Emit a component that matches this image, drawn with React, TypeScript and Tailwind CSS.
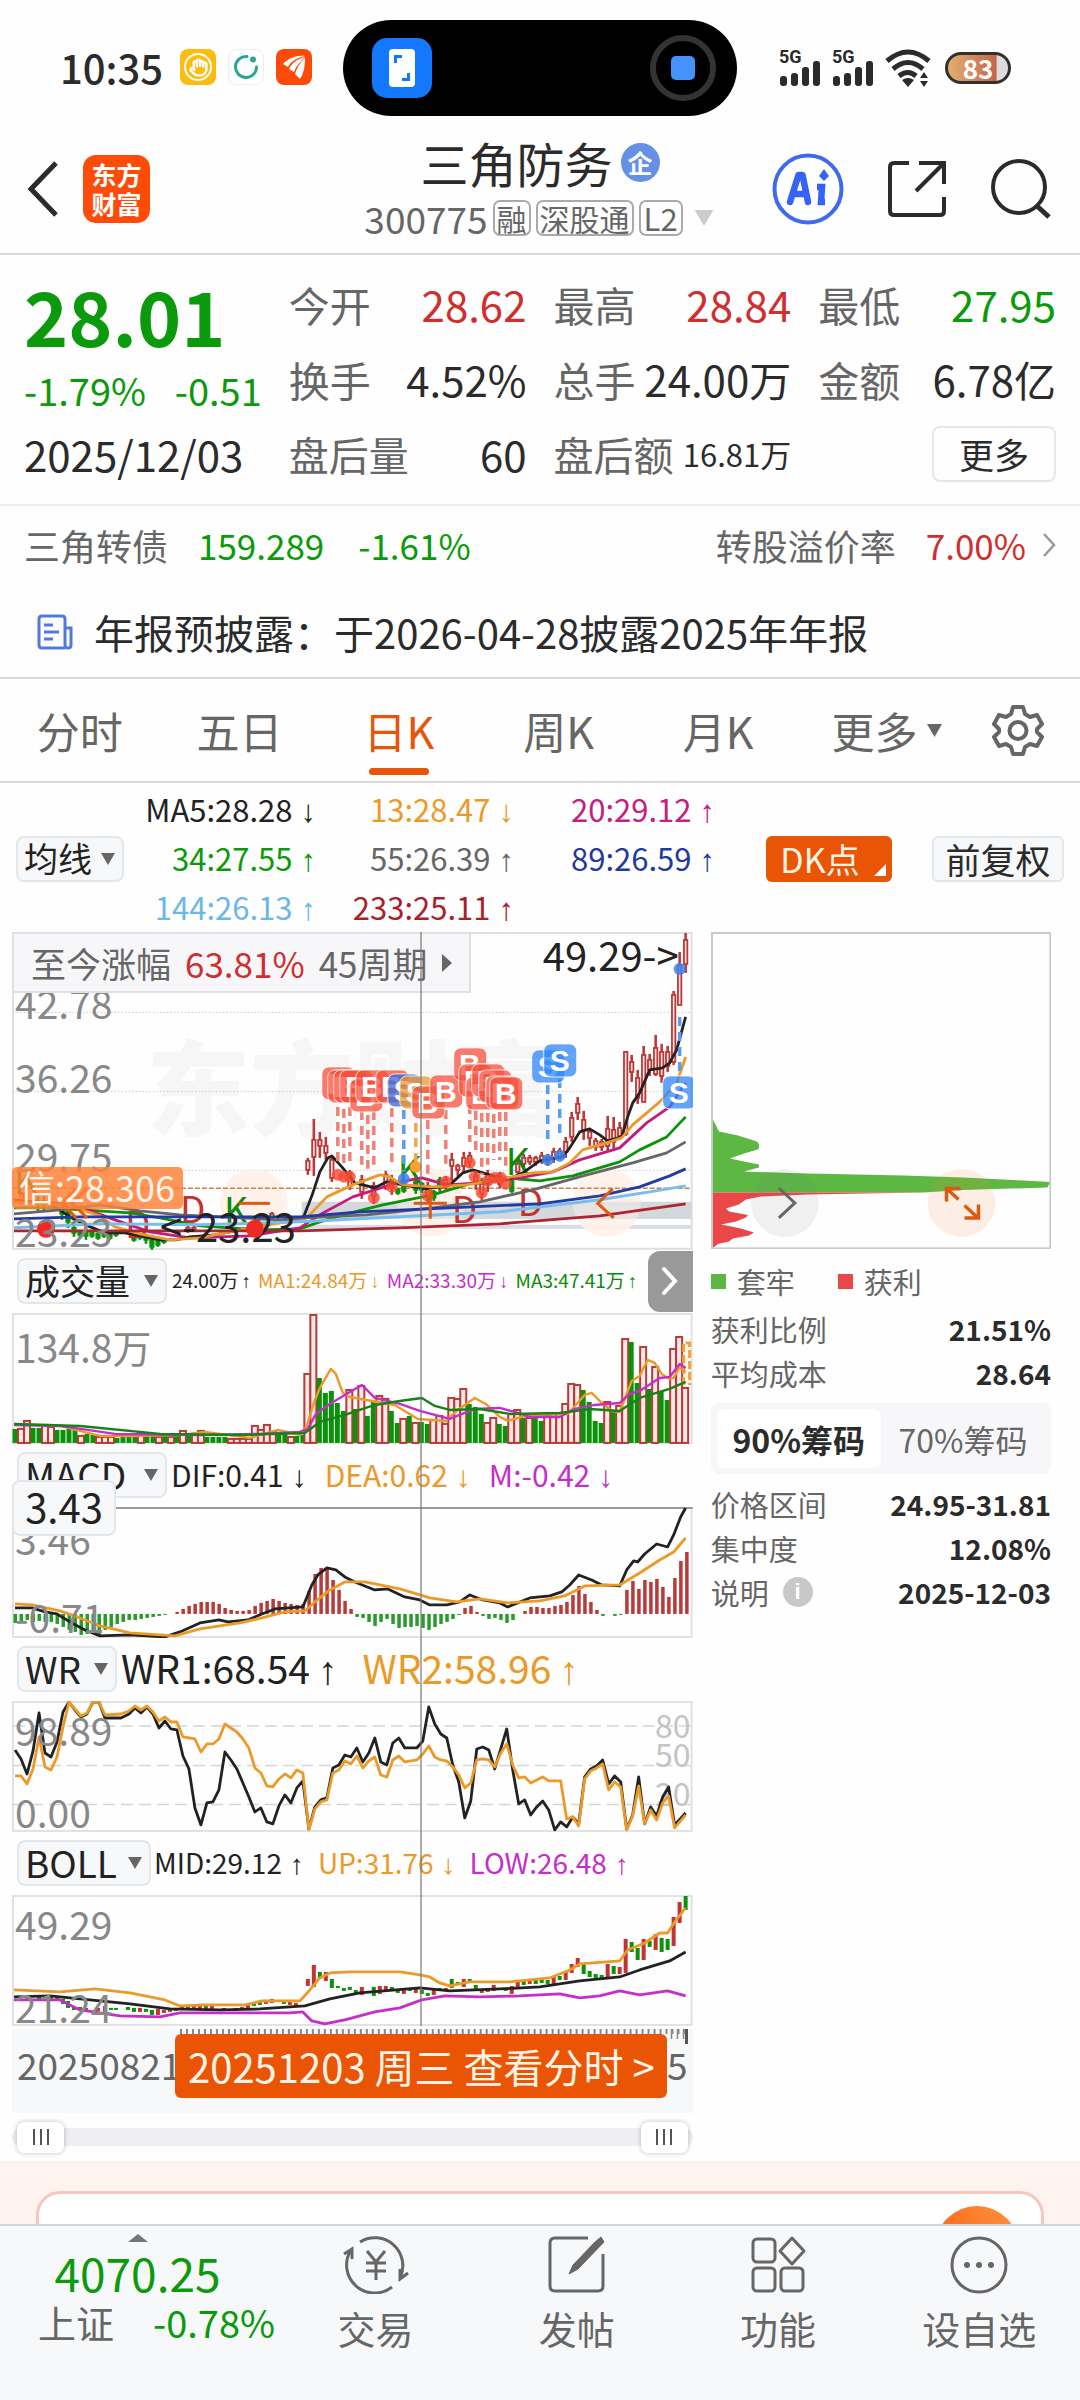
import React, { useState } from "react";
import { Hand } from "lucide-react";

type Pt = string;

/* ---------- small shared pieces ---------- */

function Arrow({ up, tight }: { up?: boolean; tight?: boolean }) {
  return <span className={"font-['Liberation_Sans',sans-serif] " + (tight ? "ml-[3px]" : "ml-[8px]")}>{up ? "↑" : "↓"}</span>;
}

function Triangle({ className }: { className: string }) {
  return (
    <svg viewBox="0 0 14 12" className={className} aria-hidden="true">
      <path d="M0 0H14L7 12Z" fill="currentColor" />
    </svg>
  );
}

function Picker({ label, options, width, size }: { label: string; options: string[]; width: string; size: string }) {
  return (
    <span className={"relative block h-[46px] shrink-0 " + width}>
      <select
        aria-label={label}
        className={
          "h-full w-full appearance-none rounded-[8px] border-2 border-[#e3e6ea] bg-[#f7f8fa] pb-[2px] pl-[6px] leading-[40px] text-[#222] " +
          size
        }
      >
        {options.map((o) => (
          <option key={o}>{o}</option>
        ))}
      </select>
      <Triangle className="pointer-events-none absolute right-[9px] top-[17px] h-[12px] w-[14px] text-[#666]" />
    </span>
  );
}

function Line({ points, color, width = 2.8 }: { points: Pt; color: string; width?: number }) {
  return <polyline points={points} fill="none" stroke={color} strokeWidth={width} strokeLinejoin="round" />;
}

const RED = "#b93a38";
const GREEN = "#0a930a";
const ORANGE = "#eb9a2a";
const PURPLE = "#c42fc9";

/* ---------- status bar ---------- */

function Signal() {
  return (
    <svg viewBox="0 0 42 38" className="h-[38px] w-[42px] overflow-visible text-[#2b2b2b]" aria-hidden="true">
      <text x="0" y="14" fontSize="18" fontWeight="700" fontFamily="Roboto, sans-serif" fill="currentColor">5G</text>
      <g fill="currentColor">
        <rect x="1" y="27" width="7" height="10" rx="3" />
        <rect x="12" y="24" width="7" height="13" rx="3" />
        <rect x="23" y="18" width="7" height="19" rx="3" />
        <rect x="34" y="12" width="7" height="25" rx="3" />
      </g>
    </svg>
  );
}

function StatusBar() {
  return (
    <div className="grid h-[125px] grid-cols-[1fr_394px_1fr] items-start">
      <div className="flex h-[134px] items-center gap-[12px] pl-[60px]">
        <span className="mr-[5px] text-[40px] font-medium leading-[50px] text-[#2b2b2b]">10:35</span>
        <span className="grid h-9 w-9 place-items-center rounded-[8px] bg-[#fdbb0d]">
          <span className="grid h-[28px] w-[28px] place-items-center rounded-full border-2 border-white">
            <Hand className="h-[19px] w-[19px] text-white" strokeWidth={3} />
          </span>
        </span>
        <span className="grid h-9 w-9 place-items-center rounded-[8px] border border-[#eee]">
          <svg viewBox="0 0 28 28" className="h-[28px] w-[28px]" aria-hidden="true">
            <path d="M15 3.5A10.5 10.5 0 1 0 24.5 14" fill="none" stroke="#25a794" strokeWidth="3" strokeLinecap="round" />
            <circle cx="21" cy="6.500" r="3" fill="#25a794" />
          </svg>
        </span>
        <span className="grid h-9 w-9 place-items-center rounded-[8px] bg-[#fc4a08]">
          <svg viewBox="0 0 30 30" className="h-[30px] w-[30px]" aria-hidden="true">
            <g fill="#fff">
              <path d="M4 12C10 6 17 3 26 4C18 6 12 9 9 15Z" />
              <path d="M10 17C13 11 18 7 26 5C21 10 17 14 15 20Z" />
              <path d="M16 22C18 16 21 10 26 6C26 14 25 21 21 27Z" />
            </g>
          </svg>
        </span>
      </div>
      <div className="mt-5 flex h-24 items-center justify-between rounded-full bg-black pl-[29px] pr-[21px]">
        <span className="grid h-[60px] w-[60px] place-items-center rounded-[15px] bg-[#1478fc]">
          <svg viewBox="0 0 26 38" className="h-[38px] w-[26px]" aria-hidden="true">
            <rect width="26" height="38" rx="4" fill="#fff" />
            <path d="M6.500 14V7.500H13M19.500 24V30.500H13" fill="none" stroke="#1478fc" strokeWidth="3" />
          </svg>
        </span>
        <span className="grid h-[66px] w-[66px] place-items-center rounded-full border-[6px] border-[#333]">
          <span className="h-6 w-6 rounded-[5px] bg-[#4493fd]" />
        </span>
      </div>
      <div className="flex h-[136px] items-center justify-end gap-[11px] pr-[69px]">
        <Signal />
        <Signal />
        <svg viewBox="0 0 46 38" className="h-[38px] w-[46px]" aria-hidden="true">
          <g fill="none" stroke="#2b2b2b" strokeWidth="5">
            <path d="M2 12Q23 -6 44 12" />
            <path d="M8 20Q23 7 38 20" />
            <path d="M14 27Q23 20 31 27" />
          </g>
          <path d="M17 31Q23 27 29 31L23 38Z" fill="#2b2b2b" />
          <path d="M35 29L39 23L43 29ZM35 32L39 38L43 32Z" fill="#2b2b2b" />
        </svg>
        <span className="ml-[3px] grid h-8 w-[66px] place-items-center rounded-full border-[3px] border-[#33302c] bg-[linear-gradient(90deg,#e0b070_0%,#c4664e_80%,#ddd_82%)] text-[26px] font-bold leading-[26px] text-white">
          83
        </span>
      </div>
    </div>
  );
}

/* ---------- title bar ---------- */

function Header() {
  return (
    <header className="grid h-[130px] grid-cols-[1fr_auto_1fr] items-center border-b-2 border-[#d9d9d9] text-[#2b2b2b]">
      <div className="flex items-center gap-[23px] pl-[26px]">
        <button aria-label="返回">
          <svg viewBox="0 0 34 56" className="h-[56px] w-[34px]" aria-hidden="true">
            <path d="M30 2L5 28L30 54" fill="none" stroke="#2b2b2b" strokeWidth="5" />
          </svg>
        </button>
        <a
          href="#home"
          className="grid h-[68px] w-[67px] place-items-center rounded-[13px] bg-[#fe4b08] text-center text-[25px] font-bold leading-[29px] text-white"
        >
          <span className="w-[52px]">东方财富</span>
        </a>
      </div>
      <div className="flex flex-col items-center">
        <h1 className="flex items-center gap-[8px] text-[48px] leading-[58px]">
          三角防务
          <span className="grid h-[39px] w-[39px] place-items-center rounded-full bg-[#6590e4] text-[25px] font-bold leading-[28px] text-white">
            企
          </span>
        </h1>
        <div className="flex items-center gap-[5px] text-[37px] leading-[54px] text-[#666]">
          300775
          <span className="rounded-[7px] border-2 border-[#aaa] px-[2px] text-[30px] leading-[32px]">融</span>
          <span className="rounded-[7px] border-2 border-[#aaa] px-[2px] text-[30px] leading-[32px]">深股通</span>
          <span className="rounded-[7px] border-2 border-[#aaa] px-[3px] text-[31px] leading-[32px]">L2</span>
          <Triangle className="ml-[4px] h-[16px] w-[24px] text-[#ccc]" />
        </div>
      </div>
      <div className="flex items-center justify-end gap-[43px] pr-[28px]">
        <button aria-label="AI">
          <svg viewBox="0 0 72 72" className="h-[72px] w-[72px]" aria-hidden="true">
            <circle cx="36" cy="36" r="33.500" fill="none" stroke="#4169ee" strokeWidth="4" />
            <path d="M18 49L26.500 22H30.500L36 49M21 41H34" fill="none" stroke="#3563f5" strokeWidth="6.500" strokeLinejoin="round" strokeLinecap="round" />
            <path d="M45 34H50L49 49H53" fill="none" stroke="#3563f5" strokeWidth="6.500" />
            <path d="M52 16L57 23L52 28L47 23Z" fill="#3563f5" />
          </svg>
        </button>
        <button aria-label="分享">
          <svg viewBox="0 0 60 60" className="h-[60px] w-[60px]" aria-hidden="true">
            <path d="M22 4H7Q3 4 3 8V52Q3 56 7 56H53Q57 56 57 52V38M32 4H57V25M57 4L29 32" fill="none" stroke="#2b2b2b" strokeWidth="4" />
          </svg>
        </button>
        <button aria-label="搜索">
          <svg viewBox="0 0 62 62" className="h-[62px] w-[62px]" aria-hidden="true">
            <circle cx="29" cy="29" r="26" fill="none" stroke="#2b2b2b" strokeWidth="4" />
            <path d="M47 48L59 59" stroke="#2b2b2b" strokeWidth="5" />
          </svg>
        </button>
      </div>
    </header>
  );
}

/* ---------- quote summary ---------- */

function Stat({ label, value, color = "text-[#2b2b2b]", size = "text-[42px]", labelSize = "text-[41px]" }: {
  label: string; value: string; color?: string; size?: string; labelSize?: string;
}) {
  return (
    <div className="flex h-[75px] items-center justify-between whitespace-nowrap leading-[60px]">
      <span className={"text-[#666] " + labelSize}>{label}</span>
      <span className={size + " " + color}>{value}</span>
    </div>
  );
}

function Quote() {
  return (
    <section className="grid grid-cols-4 gap-x-[27px] border-b-2 border-[#ededed] px-6 pb-[13px] pt-[11px]">
      <div className="row-span-2 text-[#0b9a0b]">
        <div className="mt-[9px] text-[75px] font-bold leading-[80px]">28.01</div>
        <div className="mt-[10px] flex justify-between text-[38px] leading-[50px]">
          <span>-1.79%</span>
          <span>-0.51</span>
        </div>
      </div>
      <Stat label="今开" value="28.62" color="text-[#cf2f2f]" />
      <Stat label="最高" value="28.84" color="text-[#cf2f2f]" />
      <Stat label="最低" value="27.95" color="text-[#0b9a0b]" />
      <Stat label="换手" value="4.52%" />
      <Stat label="总手" value="24.00万" />
      <Stat label="金额" value="6.78亿" />
      <div className="flex h-[75px] items-center text-[42px] leading-[60px] text-[#2b2b2b]">2025/12/03</div>
      <Stat label="盘后量" value="60" labelSize="text-[40px]" />
      <Stat label="盘后额" value="16.81万" size="text-[31px]" labelSize="text-[40px]" />
      <div className="flex h-[75px] items-center justify-end">
        <button className="h-[56px] w-[124px] rounded-[8px] border-2 border-[#e5e7e9] text-[35px] leading-[48px] text-[#2b2b2b]">更多</button>
      </div>
    </section>
  );
}

function Bond() {
  return (
    <a href="#bond" className="flex h-[80px] items-center px-6 pb-[3px] text-[36px] leading-[54px]">
      <span className="text-[#666]">三角转债</span>
      <span className="ml-[30px] text-[35px] text-[#0b9a0b]">159.289</span>
      <span className="ml-[34px] text-[35px] text-[#0b9a0b]">-1.61%</span>
      <span className="ml-auto text-[#666]">转股溢价率</span>
      <span className="ml-[30px] text-[35px] text-[#cf2f2f]">7.00%</span>
      <svg viewBox="0 0 14 24" className="ml-[16px] h-[24px] w-[14px]" aria-hidden="true">
        <path d="M2 1L12 12L2 23" fill="none" stroke="#999" strokeWidth="2.500" />
      </svg>
    </a>
  );
}

function Notice() {
  return (
    <a href="#notice" className="flex h-[93px] items-center border-b-2 border-[#d9d9d9] pl-[37px] text-[40px] leading-[54px] text-[#2b2b2b]">
      <svg viewBox="0 0 36 36" className="mr-[21px] h-[36px] w-[36px]" aria-hidden="true">
        <g fill="none" stroke="#5078dd" strokeWidth="3">
          <path d="M28 34H5Q2 34 2 31V5Q2 2 5 2H25Q28 2 28 5V31Q28 34 31 34Q34 34 34 31V14H28" />
          <path d="M7 11H16M7 18H22M7 25H16" />
        </g>
      </svg>
      年报预披露：于2026-04-28披露2025年年报
    </a>
  );
}

/* ---------- tabs and moving averages ---------- */

const TABS = ["分时", "五日", "日K", "周K", "月K"];

function Tabs() {
  const [tab, setTab] = useState("日K");
  return (
    <nav className="flex h-[104px] items-stretch border-b-2 border-[#d9d9d9] text-[43px] leading-[60px] text-[#666]">
      {TABS.map((t) => (
        <button key={t} onClick={() => setTab(t)} className={"relative flex-1 " + (t === tab ? "text-[#e65508]" : "")}>
          {t}
          {t === tab && <span className="absolute bottom-[6px] left-1/2 h-[7px] w-[60px] -translate-x-1/2 rounded-full bg-[#e65508]" />}
        </button>
      ))}
      <button className="flex w-[178px] items-center justify-center gap-[10px]">
        更多
        <Triangle className="h-[13px] w-[15px]" />
      </button>
      <button aria-label="设置" className="grid w-[104px] items-center pl-[16px]">
        <svg viewBox="0 0 52 52" className="h-[52px] w-[52px]" aria-hidden="true">
          <path
            d="M21 3H31L33 10L38 13L45 11L50 20L45 25V28L50 33L45 42L38 40L33 43L31 50H21L19 43L14 40L7 42L2 33L7 28V25L2 20L7 11L14 13L19 10Z"
            fill="none" stroke="#666" strokeWidth="4" strokeLinejoin="round"
          />
          <circle cx="26" cy="26.500" r="8.500" fill="none" stroke="#666" strokeWidth="4" />
        </svg>
      </button>
    </nav>
  );
}

const AVERAGES = [
  { t: "MA5:28.28", c: "text-[#222]" },
  { t: "13:28.47", c: "text-[#eb9a2a]" },
  { t: "20:29.12", c: "text-[#c4207f]", up: true },
  { t: "34:27.55", c: "text-[#0b9a0b]", up: true },
  { t: "55:26.39", c: "text-[#666]", up: true },
  { t: "89:26.59", c: "text-[#22399f]", up: true },
  { t: "144:26.13", c: "text-[#6cb6ea]", up: true },
  { t: "233:25.11", c: "text-[#ab1f2a]", up: true },
];

function Averages() {
  return (
    <section className="flex items-center px-4 pt-[2px]">
      <Picker label="主图指标" options={["均线"]} width="w-[108px]" size="text-[34px]" />
      <div className="grid flex-1 grid-cols-[192fr_198fr_201fr]">
        {AVERAGES.map((a) => (
          <span key={a.t} className={"h-[49px] whitespace-nowrap text-right text-[31px] leading-[48px] " + a.c}>
            {a.t}
            <Arrow up={a.up} />
          </span>
        ))}
      </div>
      <button className="relative ml-[51px] h-[46px] w-[126px] rounded-[6px] bg-[#e95504] pr-[18px] text-[34px] leading-[42px] text-[#fff3e6]">
        DK点
        <svg viewBox="0 0 12 12" className="absolute bottom-[6px] right-[6px] h-[12px] w-[12px]" aria-hidden="true">
          <path d="M12 0V12H0Z" fill="#fff" />
        </svg>
      </button>
      <button className="ml-[40px] h-[46px] w-[132px] rounded-[6px] border-2 border-[#e3e6ea] bg-[#f7f8fa] text-[35px] leading-[38px] text-[#2b2b2b]">
        前复权
      </button>
    </section>
  );
}

/* ---------- candlestick chart ---------- */

/* x, wick top, wick bottom, body top, body bottom */
const RED_CANDLES: number[][] = [
  [308, 1158, 1175, 1161, 1170], [314, 1119, 1176, 1140, 1157], [320, 1132, 1158, 1140, 1146], [326, 1137, 1160, 1146, 1153],
  [332, 1156, 1182, 1160, 1178], [350, 1170, 1190, 1173, 1186], [362, 1175, 1199, 1180, 1192], [374, 1182, 1204, 1186, 1196],
  [386, 1171, 1190, 1175, 1186], [392, 1175, 1195, 1180, 1188], [428, 1182, 1202, 1186, 1196], [440, 1180, 1192, 1183, 1188],
  [446, 1176, 1190, 1180, 1184], [452, 1153, 1181, 1160, 1166], [458, 1164, 1176, 1166, 1170], [464, 1152, 1174, 1158, 1166],
  [470, 1152, 1168, 1156, 1162], [476, 1170, 1190, 1176, 1184], [482, 1178, 1200, 1184, 1194], [488, 1170, 1192, 1175, 1184],
  [500, 1172, 1188, 1176, 1184], [518, 1160, 1178, 1164, 1172], [524, 1154, 1170, 1158, 1164], [530, 1155, 1165, 1158, 1162],
  [536, 1156, 1166, 1158, 1162], [542, 1152, 1164, 1156, 1160], [548, 1154, 1166, 1157, 1162], [554, 1148, 1163, 1152, 1158],
  [560, 1148, 1160, 1151, 1157], [566, 1137, 1158, 1142, 1152], [572, 1112, 1142, 1118, 1137], [578, 1097, 1120, 1104, 1113],
  [584, 1111, 1140, 1120, 1130], [590, 1128, 1146, 1132, 1138], [596, 1138, 1151, 1141, 1147], [602, 1139, 1151, 1142, 1147],
  [608, 1116, 1152, 1129, 1146], [614, 1117, 1151, 1130, 1142], [620, 1122, 1140, 1128, 1136], [626, 1051, 1136, 1052, 1134],
  [632, 1055, 1082, 1062, 1072], [638, 1070, 1104, 1078, 1098], [644, 1046, 1102, 1055, 1102], [650, 1054, 1076, 1060, 1070],
  [656, 1035, 1076, 1048, 1074], [662, 1044, 1083, 1052, 1076], [668, 1046, 1072, 1052, 1066], [674, 991, 1065, 995, 1062],
  [680, 952, 1005, 965, 1005], [686, 933, 973, 940, 964],
  [188, 1226, 1233, 1228, 1231], [194, 1225, 1232, 1228, 1230], [258, 1216, 1222, 1217, 1221], [272, 1212, 1219, 1214, 1218], [22, 1192, 1204, 1194, 1202],
];
const GREEN_CANDLES: number[][] = [
  [38, 1196, 1211, 1201, 1204], [44, 1196, 1211, 1201, 1205], [62, 1204, 1220, 1208, 1214], [68, 1204, 1228, 1212, 1222], [74, 1224, 1237, 1228, 1233],
  [80, 1230, 1238, 1232, 1235], [86, 1229, 1240, 1232, 1236], [92, 1230, 1238, 1232, 1236], [98, 1232, 1240, 1234, 1238], [104, 1231, 1238, 1233, 1236],
  [110, 1232, 1240, 1234, 1238], [116, 1230, 1237, 1232, 1235], [134, 1234, 1242, 1236, 1240], [140, 1233, 1240, 1235, 1238], [146, 1235, 1244, 1237, 1240],
  [152, 1236, 1250, 1239, 1247], [158, 1238, 1247, 1240, 1245], [164, 1238, 1244, 1240, 1242], [398, 1188, 1195, 1190, 1193], [404, 1182, 1193, 1185, 1191],
  [416, 1180, 1194, 1182, 1190], [422, 1182, 1193, 1184, 1190], [434, 1190, 1201, 1192, 1198], [440, 1177, 1190, 1180, 1186], [512, 1178, 1193, 1180, 1191],
];

const BUYS = [[338, 1083], [344, 1086], [350, 1086], [356, 1086], [366, 1095], [372, 1086], [392, 1086], [428, 1102], [446, 1091], [470, 1064], [475, 1080], [482, 1093], [488, 1080], [495, 1086], [502, 1092], [506, 1093]];
const STALKS = [[338, 1107, 1165], [344, 1109, 1165], [350, 1107, 1165], [362, 1111, 1165], [368, 1115, 1172], [374, 1111, 1165], [392, 1108, 1165], [428, 1120, 1180], [446, 1110, 1170], [470, 1105, 1142], [476, 1111, 1152], [482, 1113, 1175], [488, 1113, 1165], [494, 1114, 1160], [500, 1112, 1160], [506, 1112, 1168]];
const DOTS = [[338, 1175], [344, 1177], [350, 1177], [374, 1198], [392, 1187], [428, 1196], [446, 1182], [470, 1163], [475, 1177], [482, 1193], [488, 1181], [495, 1178], [501, 1178], [506, 1184]];

function Mark({ x, y, t, fill }: { x: number; y: number; t: string; fill: string }) {
  return (
    <g>
      <rect x={x - 16} y={y - 16} width="33" height="33" rx="7" fill={fill} fillOpacity="0.75" stroke="#fff" strokeOpacity="0.8" />
      <text x={x} y={y + 11} fontSize="30" fontWeight="700" textAnchor="middle" fill="#fff" fontFamily="Liberation Sans, sans-serif">{t}</text>
    </g>
  );
}

function AxisLabel({ className, children }: { className: string; children: React.ReactNode }) {
  return <span className={"pointer-events-none absolute left-[3px] text-[39px] leading-[40px] text-[#888] " + className}>{children}</span>;
}

function Candles({ list, color, fill }: { list: number[][]; color: string; fill: string }) {
  return (
    <g stroke={color} fill={fill}>
      {list.map(([x, a, b, c, d], i) => (
        <g key={i}>
          <path d={`M${x} ${a}V${b}`} strokeWidth="2.600" />
          <rect x={x - 1.7} y={c} width="3.400" height={d - c} strokeWidth="1.800" />
        </g>
      ))}
    </g>
  );
}

function PriceChart() {
  return (
    <div className="relative overflow-hidden">
      <svg viewBox="12 932 681 318" className="block h-auto w-full" fontFamily="Noto Sans CJK SC, sans-serif" role="img" aria-label="日K线图">
        <text x="146" y="1128" fontSize="104" fontWeight="900" fill="#f6f6f6">东方财富</text>
        <rect x="13" y="933" width="679" height="316" fill="none" stroke="#dedfe1" strokeWidth="2" />
        <path d="M13 1012.5H692M13 1091.5H692M13 1170.5H692" stroke="#ccc" strokeDasharray="1.500 2" />
        <rect x="302" y="1202" width="390" height="17" fill="#d4d7db" />
        <rect x="302" y="1225" width="390" height="4" fill="#dadce4" />
        {[77, 254, 431, 607].map((x) => (
          <circle key={x} cx={x} cy="1203" r="34" fill="#fff1e9" fillOpacity="0.9" />
        ))}
        <rect x="302" y="1202" width="390" height="17" fill="#d4d7db" fillOpacity="0.5" />
        <path d="M13 1188.5H692" stroke="#c9814a" strokeWidth="1.500" strokeDasharray="5 2" />
        <Candles list={RED_CANDLES} color={RED} fill="#fbe6e4" />
        <Candles list={GREEN_CANDLES} color={GREEN} fill="#0a930a" />
        <g fontSize="37" fill="#c8302c">
          <text x="125" y="1238">D</text>
          <text x="180" y="1223">D</text>
          <text x="452" y="1223">D</text>
          <text x="518" y="1216">D</text>
        </g>
        <g fontSize="37" fill="#0b8a0b">
          <text x="14" y="1194">K</text>
          <text x="224" y="1224">K</text>
          <text x="398" y="1183">K</text>
          <text x="506" y="1175">K</text>
        </g>
        <Line color={GREEN} points="14,1208 50,1208 130,1213 160,1218 200,1226 260,1230 300,1229 317,1223 343,1215 383,1205 433,1195 473,1183 507,1178 540,1181 573,1176 620,1162 640,1150 667,1137 686,1117" />
        <Line color="#c31c7c" points="14,1202 60,1203 85,1209 115,1220 150,1232 190,1238 250,1236 300,1228 320,1215 353,1197 400,1182 422,1178 447,1185 480,1183 520,1178 553,1172 580,1160 620,1148 647,1123 670,1107 686,1083" />
        <Line color="#222" points="14,1200 50,1204 75,1220 88,1226 105,1233 125,1233 140,1236 160,1240 176,1240 190,1237 215,1235 240,1230 290,1220 303,1219 312,1196 320,1172 328,1158 332,1156 342,1167 355,1183 375,1188 387,1182 403,1185 427,1189 450,1185 463,1173 473,1170 490,1175 507,1180 523,1173 540,1161 563,1157 570,1148 580,1132 590,1129 600,1135 608,1141 622,1137 628,1117 633,1103 640,1093 650,1070 663,1068 670,1063 677,1050 686,1017" />
        <Line color={ORANGE} points="14,1202 70,1206 100,1216 115,1227 140,1234 170,1240 200,1238 250,1228 300,1220 307,1218 327,1197 353,1185 380,1175 390,1177 403,1185 433,1187 467,1185 507,1178 533,1173 553,1172 570,1163 583,1150 607,1143 622,1138 633,1125 660,1102 677,1083 686,1057" />
        <Line color="#666" points="14,1214 60,1210 100,1205 140,1211 180,1215 280,1220 303,1218 367,1215 433,1208 480,1202 533,1190 587,1175 633,1163 667,1153 686,1142" />
        <Line color="#79bdec" width={3} points="14,1228 100,1224 200,1225 300,1222 400,1217 500,1212 600,1200 650,1192 686,1186" />
        <Line color="#2339a3" points="14,1219 80,1217 180,1217 300,1217 360,1212 450,1208 540,1204 600,1196 640,1187 670,1176 686,1169" />
        <Line color="#ac2530" points="14,1231 150,1231 300,1231 400,1228 500,1224 600,1216 686,1204" />
        <circle cx="46" cy="1229" r="9" fill="#ee2a24" />
        <g strokeWidth="3.500" fill="none" strokeDasharray="9 6">
          {STALKS.map(([x, a, b], i) => (
            <path key={i} d={`M${x} ${a}V${b}`} stroke="#ec8377" />
          ))}
          <path d="M404 1110V1172M548 1085V1142M560 1079V1137M680 1017V1077" stroke="#5c9cf0" />
          <path d="M416 1123V1162" stroke="#eeaa4a" />
        </g>
        {DOTS.map(([x, y], i) => (
          <circle key={i} cx={x} cy={y} r="6" fill="#f5482f" fillOpacity="0.8" />
        ))}
        <circle cx="416" cy="1167" r="6" fill="#f8a030" />
        {[[404, 1179], [548, 1160], [560, 1156], [680, 969]].map(([x, y]) => (
          <circle key={x} cx={x} cy={y} r="6" fill="#3d82ef" fillOpacity="0.85" />
        ))}
        {BUYS.slice(0, 7).map(([x, y], i) => <Mark key={i} x={x} y={y} t="B" fill="#f5503c" />)}
        <Mark x={404} y={1090} t="S" fill="#3468d8" />
        <Mark x={416} y={1092} t="S" fill="#f09a30" />
        {BUYS.slice(7).map(([x, y], i) => <Mark key={i} x={x} y={y} t="B" fill="#f5503c" />)}
        <Mark x={548} y={1066} t="S" fill="#2f86f8" />
        <Mark x={560} y={1060} t="S" fill="#2f86f8" />
        <Mark x={679} y={1092} t="S" fill="#2f86f8" />
        <g stroke="#e05a10" fill="none" strokeWidth="3">
          <path d="M76 1189L62 1203L76 1218M87 1189L72 1203L87 1218" />
          <path d="M239 1203.500H270" />
          <path d="M414 1203.500H447M430.500 1189V1219" />
          <path d="M613 1189L598 1203.500L614 1218" />
        </g>
        <text x="160" y="1242" fontSize="40" fill="#222">&lt;-23.23</text>
        <circle cx="255" cy="1229" r="9" fill="#ee2a24" />
        <text x="543" y="971" fontSize="40" fill="#222">49.29-&gt;</text>
      </svg>
      <AxisLabel className="top-[50px]">42.78</AxisLabel>
      <AxisLabel className="top-[124px]">36.26</AxisLabel>
      <AxisLabel className="top-[203px]">29.75</AxisLabel>
      <AxisLabel className="top-[278px]">23.23</AxisLabel>
      <span className="absolute left-0 top-[235px] h-[42px] rounded-[5px] bg-[#ff8238]/85 pl-[7px] pr-[8px] text-[36px] leading-[38px] text-[#fff5ea]">
        信:28.306
      </span>
      <button className="absolute left-0 top-0 flex h-[61px] items-center gap-[14px] border-2 border-[#e0e1e4] bg-[#f7f7fa] pl-[17px] pr-[17px] text-[35px] leading-[54px] text-[#666]">
        <span>至今涨幅</span>
        <span className="text-[#cf2f2f]">63.81%</span>
        <span>45周期</span>
        <svg viewBox="0 0 10 18" className="h-[18px] w-[10px]" aria-hidden="true">
          <path d="M0 0L10 9L0 18Z" fill="#666" />
        </svg>
      </button>
    </div>
  );
}

/* ---------- indicator charts ---------- */

const VOL_LEFT = "G14 R15 R23 G15 G15 R19 R17 G13 G13 G14 G14 R8 G9 G8 R7 R7 R7 G5 G6 G6 G7 R11 G8 G8 R7 G8 R7 G8 R13 G9 R10 R13 G6 G6 G6 G6 R5 R5 R5 R5 R18 R14 R19 R12 G10 G10 R7 G7 G8".split(" ");
const VOL_RIGHT = "R70 R129 G65 G50 G52 G40 G32 R54 G34 R58 G27 G41 R48 R45 G32 G20 R25 G27 R21 G21 G19 R24 R28 R20 R46 R45 R55 G39 G36 G29 R21 R26 G19 G17 R30 R34 G25 R26 G25 G22 R29 R30 R30 R40 R60 R59 G53 G41 G22 G20 R42 G31 R38 R105 G101 G60 R97 G54 R77 G52 G43 R95 R107 R56".split(" ");

function Bar({ x, code }: { x: number; code: string }) {
  const h = Number(code.slice(1));
  return code[0] === "G" ? (
    <rect x={x - 2.5} y={1442 - h} width="5" height={h} fill={GREEN} />
  ) : (
    <rect x={x - 3} y={1443 - h} width="6" height={h - 1} fill="#fbe9e8" stroke={RED} strokeWidth="2" />
  );
}

function VolumeChart() {
  return (
    <div className="relative">
      <svg viewBox="12 1312 681 131" className="block h-auto w-full" role="img" aria-label="成交量">
        <rect x="13" y="1313" width="679" height="129" fill="none" stroke="#e0e1e3" strokeWidth="2" />
        {VOL_LEFT.map((c, i) => <Bar key={i} x={15 + 6 * i} code={c} />)}
        {VOL_RIGHT.map((c, i) => <Bar key={i} x={307.5 + 6 * i} code={c} />)}
        <path d="M684 1384V1342H690V1384" fill="#fff6e8" stroke="#f2a23a" strokeWidth="3" strokeDasharray="8 3" />
        <Line color={ORANGE} width={2.4} points="14,1423 60,1425 80,1430 100,1435 130,1435 180,1434 205,1431 250,1437 278,1429 300,1434 307,1425 314,1402 320,1387 331,1368 336,1373 343,1392 350,1396 372,1400 395,1404 418,1418 446,1420 458,1409 475,1397 486,1403 500,1416 508,1420 530,1414 568,1413 585,1394 592,1392 600,1400 612,1410 620,1411 632,1380 640,1375 648,1359 655,1362 662,1373 670,1378 674,1377 680,1366 686,1371" />
        <Line color={PURPLE} width={2.4} points="14,1424 60,1425 115,1433 200,1434 260,1433 300,1431 308,1428 316,1413 330,1403 350,1391 362,1384 375,1397 400,1403 420,1410 450,1418 475,1408 500,1407 515,1411 530,1416 560,1416 575,1408 595,1404 620,1402 630,1393 640,1390 660,1377 670,1376 680,1363 686,1367" />
        <Line color="#178217" width={2.4} points="14,1423 80,1425 160,1433 240,1434 305,1432 320,1421 345,1414 375,1404 400,1400 422,1397 435,1405 450,1409 480,1408 510,1413 560,1412 590,1408 620,1410 640,1397 670,1388 686,1381" />
      </svg>
      <AxisLabel className="top-[13px]">134.8万</AxisLabel>
    </div>
  );
}

const HIST = [
  -9, -7, -6, -8, -7, -8, -8, -10, -13, -16, -18, -21, -20, -19, -22, -16, -13, -10, -8, -6, -6, -5, -4, -3, -2, -1, 0, 2, 5, 8, 10, 12, 12, 12, 10, 6, 4, 3, 3, 4, 8, 11, 13, 15, 13, 11, 10, 9, 10,
  23, 40, 46, 46, 34, 24, 13, 5, -3, -4, -8, -12, -8, -5, -10, -14, -13, -13, -12, -14, -16, -13, -10, -8, -5, -1, 6, 8, 2, -2, -5, -4, -6, -9, -6, 0, 3, 7, 7, 6, 6, 8, 9, 12, 19, 28, 20, 12, 4, -2, 0, -2, -1,
  24, 33, 25, 34, 32, 35, 27, 17, 36, 53, 62,
];

function MacdChart() {
  return (
    <div className="relative">
      <svg viewBox="12 1507 681 131" className="block h-auto w-full" role="img" aria-label="MACD">
        <path d="M13 1507V1637H692V1507" fill="none" stroke="#e0e1e3" strokeWidth="2" />
        <path d="M12 1508H693" stroke="#777" strokeWidth="1.500" />
        {HIST.map((v, i) => (
          <rect key={i} x={13.5 + 6 * i} y={v > 0 ? 1614 - v : 1614} width="3.500" height={Math.abs(v)} fill={v > 0 ? RED : "#2a9a2a"} />
        ))}
        <Line color="#222" points="15,1608 32,1608 45,1612 57,1614 70,1622 85,1630 100,1636 130,1635 165,1637 180,1632 200,1623 219,1620 228,1622 248,1620 262,1614 275,1609 303,1607 312,1585 318,1575 327,1568 336,1570 345,1577 355,1582 375,1590 388,1589 405,1597 420,1600 430,1605 447,1605 460,1602 470,1595 483,1600 500,1603 508,1607 530,1598 550,1596 562,1592 570,1585 579,1575 592,1580 602,1585 620,1586 627,1570 634,1561 638,1562 645,1554 657,1544 668,1547 674,1535 681,1517 686,1508" />
        <Line color={ORANGE} points="15,1604 32,1605 60,1611 80,1618 100,1626 130,1633 175,1636 200,1629 240,1623 262,1618 285,1612 305,1611 315,1602 330,1590 345,1582 365,1582 400,1589 430,1598 457,1602 480,1599 508,1603 540,1601 565,1596 585,1586 620,1585 640,1573 660,1560 674,1552 686,1538" />
      </svg>
      <AxisLabel className="top-[11px]">3.46</AxisLabel>
      <AxisLabel className="top-[89px]">-0.71</AxisLabel>
      <span className="absolute left-0 top-[-27px] h-[56px] w-[104px] rounded-[8px] border-2 border-[#e3e6ea] bg-[#f7f8fa] text-center text-[40px] leading-[48px] text-[#222]">3.43</span>
    </div>
  );
}

function WrChart() {
  return (
    <div className="relative">
      <svg viewBox="12 1701 681 131" className="block h-auto w-full" role="img" aria-label="WR">
        <rect x="13" y="1702" width="679" height="129" fill="none" stroke="#e0e1e3" strokeWidth="2" />
        <path d="M13 1726H692M13 1765.500H692M13 1804.500H692" stroke="#d5d5d5" strokeWidth="1.500" strokeDasharray="12 6" />
        <g fontSize="32" fill="#c4c4c4" textAnchor="end" fontFamily="Noto Sans CJK SC, sans-serif">
          <text x="691" y="1738">80</text>
          <text x="691" y="1767">50</text>
          <text x="691" y="1806">20</text>
        </g>
        <Line color="#222" points="15,1750 21,1759 27,1774 33,1751 39,1713 45,1753 51,1757 57,1742 63,1712 69,1702 75,1710 81,1717 87,1714 93,1702 99,1702 105,1718 121,1718 129,1714 135,1708 141,1713 147,1707 153,1714 159,1728 165,1721 171,1729 177,1730 183,1756 189,1769 195,1808 201,1825 207,1803 213,1802 219,1790 225,1752 231,1760 237,1769 243,1783 249,1797 255,1812 261,1808 267,1822 273,1824 279,1806 285,1795 291,1803 297,1788 303,1781 309,1829 315,1807 321,1800 327,1798 333,1768 339,1765 345,1755 351,1757 357,1748 363,1762 369,1753 375,1738 381,1762 387,1765 393,1743 399,1738 405,1748 417,1748 423,1741 429,1707 435,1724 441,1734 447,1738 453,1765 459,1782 465,1818 471,1801 477,1749 483,1747 489,1750 495,1769 501,1749 507,1729 513,1770 519,1804 525,1800 531,1815 537,1807 543,1801 549,1810 555,1830 561,1822 567,1827 573,1817 579,1824 585,1777 591,1769 597,1766 603,1760 609,1784 615,1776 621,1782 627,1829 633,1815 639,1777 645,1824 651,1807 657,1816 663,1797 669,1787 675,1825 686,1813" />
        <Line color={ORANGE} points="15,1776 21,1776 27,1784 33,1769 39,1737 45,1767 51,1770 57,1757 63,1727 69,1702 75,1709 81,1716 87,1713 93,1702 99,1702 105,1715 121,1714 129,1711 135,1706 141,1710 147,1706 153,1712 159,1721 165,1717 171,1722 177,1722 183,1737 189,1738 195,1739 201,1752 207,1744 213,1744 219,1739 225,1724 231,1728 237,1732 243,1739 249,1748 255,1768 261,1773 267,1786 273,1787 279,1779 285,1774 291,1778 297,1770 303,1773 309,1830 315,1809 321,1802 327,1800 333,1773 339,1770 345,1761 351,1764 357,1756 363,1768 369,1761 375,1757 381,1775 387,1777 393,1760 399,1756 405,1762 417,1760 423,1754 429,1746 435,1757 441,1760 447,1761 453,1767 459,1775 465,1788 471,1783 477,1760 483,1759 489,1760 495,1767 501,1753 507,1744 513,1765 519,1778 525,1777 531,1783 543,1777 549,1781 561,1781 567,1819 573,1817 579,1826 585,1779 591,1771 597,1768 603,1764 609,1790 615,1782 621,1787 627,1830 633,1816 639,1786 645,1824 651,1810 657,1820 663,1803 669,1796 675,1828 686,1815" />
      </svg>
      <AxisLabel className="top-[8px]">98.89</AxisLabel>
      <AxisLabel className="top-[90px]">0.00</AxisLabel>
    </div>
  );
}

/* x, top, bottom, 1 = rising */
const BOLL_BARS: number[][] = [
  [27, 1996, 1999, 1], [39, 1997, 2000, 0], [45, 1996, 2001, 1], [51, 1997, 2000, 0], [57, 1998, 2001, 0], [63, 1999, 2004, 0], [68, 2001, 2008, 0], [74, 2007, 2010, 0],
  [80, 2007, 2010, 0], [86, 2008, 2011, 1], [98, 2008, 2011, 1], [105, 2006, 2012, 1], [111, 2008, 2010, 0], [116, 2008, 2010, 0], [128, 2007, 2010, 0], [134, 2008, 2012, 0],
  [140, 2008, 2012, 1], [146, 2009, 2012, 0], [152, 2010, 2015, 0], [158, 2009, 2015, 1], [164, 2010, 2013, 1], [170, 2008, 2012, 1], [176, 2008, 2011, 0], [182, 2007, 2010, 1],
  [188, 2007, 2010, 0], [194, 2006, 2010, 1], [200, 2004, 2009, 1], [206, 2006, 2009, 0], [212, 2005, 2009, 1], [224, 2008, 2010, 0], [236, 2008, 2011, 1], [242, 2007, 2010, 1],
  [248, 2005, 2010, 1], [254, 2003, 2006, 0], [260, 2001, 2005, 0], [266, 2000, 2004, 1], [272, 1999, 2003, 1], [284, 2002, 2004, 0], [290, 2002, 2005, 1], [296, 2003, 2006, 1],
  [308, 1979, 1986, 1], [314, 1965, 1987, 1], [320, 1972, 1979, 0], [326, 1972, 1981, 1], [332, 1979, 1988, 0], [338, 1986, 1988, 0], [344, 1988, 1991, 0], [350, 1987, 1990, 0],
  [356, 1990, 1994, 0], [362, 1987, 1995, 1], [368, 1991, 1993, 0], [374, 1987, 1996, 0], [380, 1986, 1994, 1], [386, 1986, 1991, 1], [392, 1987, 1991, 0], [398, 1991, 1993, 0],
  [404, 1989, 1994, 1], [410, 1988, 1991, 0], [416, 1988, 1993, 1], [422, 1990, 1994, 0], [428, 1993, 1996, 0], [434, 1989, 1995, 1], [440, 1988, 1990, 0], [446, 1988, 1991, 1],
  [452, 1979, 1988, 0], [458, 1982, 1985, 0], [464, 1979, 1987, 1], [470, 1979, 1983, 0], [476, 1985, 1989, 0], [482, 1989, 1993, 1], [488, 1988, 1992, 1], [494, 1985, 1991, 1],
  [500, 1988, 1990, 0], [506, 1989, 1991, 0], [512, 1986, 1994, 1], [518, 1981, 1987, 1], [524, 1981, 1985, 0], [530, 1979, 1984, 1], [536, 1980, 1984, 0], [542, 1980, 1983, 0],
  [548, 1980, 1984, 0], [554, 1976, 1984, 1], [560, 1976, 1980, 0], [566, 1972, 1980, 1], [572, 1964, 1973, 1], [578, 1958, 1967, 1], [584, 1964, 1974, 0], [590, 1971, 1977, 0],
  [596, 1974, 1978, 0], [602, 1975, 1978, 0], [608, 1964, 1979, 1], [614, 1966, 1974, 0], [620, 1967, 1974, 1], [626, 1939, 1973, 1], [632, 1942, 1952, 0], [638, 1948, 1960, 0],
  [644, 1939, 1960, 1], [650, 1941, 1947, 0], [656, 1934, 1950, 1], [662, 1938, 1952, 0], [668, 1939, 1950, 0], [674, 1917, 1946, 1], [680, 1902, 1923, 1], [686, 1896, 1910, 0],
];

function BollChart() {
  return (
    <div className="relative">
      <svg viewBox="12 1895 681 131" className="block h-auto w-full" role="img" aria-label="BOLL">
        <rect x="13" y="1896" width="679" height="129" fill="none" stroke="#e0e1e3" strokeWidth="2" />
        {BOLL_BARS.map(([x, a, b, up]) => (
          <rect key={x} x={x - 2} y={a} width="4" height={b - a} fill={up ? "#c23434" : GREEN} />
        ))}
        <Line color={ORANGE} points="14,1990 60,1992 95,1989 130,1993 165,2000 180,2006 205,2005 245,2005 262,2001 300,2001 310,1990 320,1978 330,1973 350,1972 400,1972 420,1975 430,1977 440,1983 450,1986 470,1982 510,1982 550,1978 570,1970 580,1964 620,1961 628,1950 645,1943 660,1933 668,1933 675,1922 686,1908" />
        <Line color="#222" points="14,1997 50,1996 90,2000 130,2004 170,2009 220,2010 260,2009 305,2006 330,1999 360,1993 420,1988 450,1991 500,1989 540,1987 580,1981 620,1977 640,1970 670,1961 686,1952" />
        <Line color={PURPLE} points="14,2000 60,2000 80,2010 120,2016 160,2017 180,2013 240,2013 290,2013 303,2012 312,2021 325,2024 345,2020 375,2012 400,2008 422,2000 445,1996 480,1997 520,1996 560,1994 580,1998 600,1996 620,1991 640,1995 668,1991 686,1996" />
      </svg>
      <AxisLabel className="top-[8px]">49.29</AxisLabel>
      <AxisLabel className="top-[91px]">21.24</AxisLabel>
    </div>
  );
}

function IndicatorRow({ children }: { children: React.ReactNode }) {
  return <div className="flex h-[63px] items-center whitespace-nowrap pl-[5px]">{children}</div>;
}

function TimeAxis() {
  return (
    <div className="relative mt-[3px] h-[84px] bg-[#f7f8fa]">
      <svg viewBox="0 0 681 16" className="block h-auto w-full" aria-hidden="true">
        <path d="M168 2.500H676" stroke="#888" strokeWidth="5" strokeDasharray="2 4" />
        <path d="M660 0V10M666 0V10M672 0V10" stroke="#888" strokeWidth="1.500" />
        <path d="M675 0V15" stroke="#555" strokeWidth="3" />
      </svg>
      <div className="flex justify-between px-[5px] text-[37px] leading-[38px] text-[#666]">
        <span>20250821</span>
        <span>5</span>
      </div>
      <button className="absolute left-[24%] top-[5px] h-[64px] w-[492px] whitespace-nowrap rounded-[6px] bg-[#e95504] text-[40px] leading-[54px] text-[#fff3e6]">
        20251203 周三 查看分时 &gt;
      </button>
    </div>
  );
}

const THUMB =
  "pointer-events-none absolute inset-0 h-full w-full appearance-none bg-transparent [&::-webkit-slider-thumb]:pointer-events-auto [&::-webkit-slider-thumb]:h-[31px] [&::-webkit-slider-thumb]:w-[47px] [&::-webkit-slider-thumb]:appearance-none [&::-webkit-slider-thumb]:rounded-[7px] [&::-webkit-slider-thumb]:bg-white [&::-webkit-slider-thumb]:bg-[linear-gradient(90deg,#555_2px,transparent_2px,transparent_7px,#555_7px,#555_9px,transparent_9px,transparent_14px,#555_14px)] [&::-webkit-slider-thumb]:bg-[length:16px_16px] [&::-webkit-slider-thumb]:bg-center [&::-webkit-slider-thumb]:bg-no-repeat [&::-webkit-slider-thumb]:shadow-[0_0_5px_rgba(0,0,0,0.25)]";

function RangeSlider() {
  return (
    <div className="mt-[9px] flex h-[31px] items-center rounded-full">
      <div className="relative h-[18px] w-full rounded-full bg-[#efeff1] px-[5px]">
        <div className="relative h-full">
          <input type="range" aria-label="起始日期" defaultValue={0} className={THUMB} />
          <input type="range" aria-label="结束日期" defaultValue={100} className={THUMB} />
        </div>
      </div>
    </div>
  );
}

/* ---------- cost distribution ---------- */

function Row({ label, value, info }: { label: string; value: string; info?: boolean }) {
  return (
    <div className="flex items-center justify-between text-[29px] leading-[44px]">
      <dt className="flex items-center gap-[14px] text-[#666]">
        {label}
        {info && (
          <span className="grid h-[30px] w-[30px] place-items-center rounded-full bg-[#c8c8c8] font-['Liberation_Sans',sans-serif] text-[22px] font-bold leading-[24px] text-white">i</span>
        )}
      </dt>
      <dd className="text-[28px] font-bold text-[#2b2b2b]">{value}</dd>
    </div>
  );
}

function ChipPanel() {
  return (
    <aside>
      <svg viewBox="710 932 341 318" className="block h-auto w-full" role="img" aria-label="筹码分布">
        <path
          d="M711 1118L718 1132L737 1136L756 1142Q760 1146 757 1150L743 1154L729 1159L743 1162L758 1165V1168L743 1172L807 1174L903 1176L963 1178L1023 1181L1050 1182.500L1047 1188L963 1190.500L923 1193H711Z"
          fill="#5cb843"
        />
        <path
          d="M711 1193H923L807 1195L760 1197L745 1200L738 1205L725 1209L728 1212L747 1215.500L745 1218L735 1222L720 1225L740 1229L753 1233L748 1236L732 1239L728 1242L717 1244.500L711 1249Z"
          fill="#e84848"
        />
        <rect x="711" y="933" width="339" height="316" fill="none" stroke="#c9c9c9" strokeWidth="2" />
        <circle cx="784" cy="1203.500" r="34" fill="#777" fillOpacity="0.1" />
        <circle cx="961" cy="1203.500" r="34" fill="#f88040" fillOpacity="0.13" />
        <path d="M778 1188.500L794 1203.500L778 1218.500" fill="none" stroke="#666" strokeWidth="3" />
        <path d="M946 1202V1189H960M946 1189L958 1200M978 1205V1218.500H964M976 1217L964 1206" fill="none" stroke="#dc5a10" strokeWidth="3.500" />
      </svg>
      <div className="mt-[10px] flex items-center text-[29px] leading-[44px] text-[#666]">
        <span className="mr-[11px] h-[15px] w-[15px] bg-[#5cb843]" />
        套牢
        <span className="ml-[43px] mr-[11px] h-[15px] w-[15px] bg-[#e84848]" />
        获利
      </div>
      <dl className="mt-[4px]">
        <Row label="获利比例" value="21.51%" />
        <Row label="平均成本" value="28.64" />
      </dl>
      <div className="mt-[8px] grid h-[71px] grid-cols-2 rounded-[8px] bg-[#f7f7fa] p-[6px] text-[32px] leading-[48px]">
        <button className="rounded-[8px] bg-white font-bold text-[#2b2b2b]">90%筹码</button>
        <button className="text-[#666]">70%筹码</button>
      </div>
      <dl className="mt-[8px]">
        <Row label="价格区间" value="24.95-31.81" />
        <Row label="集中度" value="12.08%" />
        <Row label="说明" value="2025-12-03" info />
      </dl>
    </aside>
  );
}

function Charts() {
  return (
    <section className="grid grid-cols-[2fr_1fr] gap-[18px] pl-3 pr-[29px]">
      <div className="min-w-0">
        <div className="relative">
          <PriceChart />
          <IndicatorRow>
            <Picker label="副图指标一" options={["成交量"]} width="w-[150px]" size="text-[35px]" />
            <div className="ml-[5px] flex gap-[7px] text-[19px] leading-[40px]">
              <span className="text-[#222]">24.00万<Arrow up tight /></span>
              <span className="text-[#eb9a2a]">MA1:24.84万<Arrow tight /></span>
              <span className="text-[#c42fc9]">MA2:33.30万<Arrow tight /></span>
              <span className="text-[#0b8a0b]">MA3:47.41万<Arrow up tight /></span>
            </div>
            <button aria-label="展开" className="ml-auto grid h-[61px] w-[45px] shrink-0 place-items-center rounded-l-[12px] bg-[#999]">
              <svg viewBox="0 0 18 30" className="h-[30px] w-[18px]" aria-hidden="true">
                <path d="M3 3L14 15L3 27" fill="none" stroke="#fff" strokeWidth="4" strokeLinecap="round" />
              </svg>
            </button>
          </IndicatorRow>
          <VolumeChart />
          <IndicatorRow>
            <Picker label="副图指标二" options={["MACD"]} width="w-[150px]" size="text-[37px]" />
            <div className="ml-[4px] flex gap-[18px] text-[30px] leading-[40px]">
              <span className="text-[#222]">DIF:0.41<Arrow /></span>
              <span className="text-[#eb9a2a]">DEA:0.62<Arrow /></span>
              <span className="text-[#c42fc9]">M:-0.42<Arrow /></span>
            </div>
          </IndicatorRow>
          <MacdChart />
          <IndicatorRow>
            <Picker label="副图指标三" options={["WR"]} width="w-[100px]" size="text-[37px]" />
            <div className="ml-[4px] flex gap-[25px] text-[39px] leading-[44px]">
              <span className="text-[#222]">WR1:68.54<Arrow up /></span>
              <span className="text-[#eb9a2a]">WR2:58.96<Arrow up /></span>
            </div>
          </IndicatorRow>
          <WrChart />
          <IndicatorRow>
            <Picker label="副图指标四" options={["BOLL"]} width="w-[134px]" size="text-[37px]" />
            <div className="ml-[3px] flex gap-[14px] text-[28px] leading-[40px]">
              <span className="text-[#222]">MID:29.12<Arrow up /></span>
              <span className="text-[#eb9a2a]">UP:31.76<Arrow /></span>
              <span className="text-[#c42fc9]">LOW:26.48<Arrow up /></span>
            </div>
          </IndicatorRow>
          <BollChart />
          <span className="pointer-events-none absolute inset-y-0 left-[60%] w-[2px] bg-[#777]/60" />
        </div>
        <TimeAxis />
        <RangeSlider />
      </div>
      <ChipPanel />
    </section>
  );
}

/* ---------- bottom navigation ---------- */

const ICON = "h-[60px] w-[66px]";

function NavItem({ label, children }: { label: string; children: React.ReactNode }) {
  return (
    <button className="flex flex-1 flex-col items-center pt-[8px] text-[38px] leading-[48px] text-[#666]">
      <svg viewBox="0 0 66 60" className={ICON} fill="none" stroke="#666" strokeWidth="3" aria-hidden="true">{children}</svg>
      <span className="mt-[10px]">{label}</span>
    </button>
  );
}

function BottomNav() {
  return (
    <nav className="sticky bottom-0 flex h-[176px] shrink-0 border-t-2 border-[#d3d5d9] bg-[#f7f8fa]">
      <a href="#index" className="flex w-[275px] flex-col items-center pt-[8px]">
        <svg viewBox="0 0 20 8" className="h-[8px] w-[20px]" aria-hidden="true">
          <path d="M10 0L20 8H0Z" fill="#777" />
        </svg>
        <span className="mt-[4px] text-[46px] leading-[52px] text-[#0b9a0b]">4070.25</span>
        <span className="flex w-full justify-between pl-[38px] text-[38px] leading-[48px]">
          <span className="text-[#666]">上证</span>
          <span className="text-[#0b9a0b]">-0.78%</span>
        </span>
      </a>
      <NavItem label="交易">
        <path d="M17 8A28 28 0 0 1 57 44M49 53A28 28 0 0 1 8 16M1 20L9 15V25M65 39L57 45V35" />
        <path d="M24 17L33 28L42 17M33 28V46M23 29H43M23 37H43" />
      </NavItem>
      <NavItem label="发帖">
        <path d="M44 4H11Q6 4 6 9V52Q6 57 11 57H54Q59 57 59 52V20" />
        <path d="M57 3L60 8L34 35L25 40L29 31L51 8Z" fill="#666" strokeWidth="1" />
      </NavItem>
      <NavItem label="功能">
        <rect x="8" y="5" width="22" height="23" rx="4" />
        <rect x="8" y="34" width="22" height="23" rx="4" />
        <rect x="36" y="34" width="22" height="23" rx="4" />
        <path d="M47 4L59 17L47 30L35 17Z" strokeLinejoin="round" />
      </NavItem>
      <NavItem label="设自选">
        <circle cx="33" cy="31" r="27" />
        <g fill="#666" stroke="none">
          <circle cx="21" cy="31" r="3" />
          <circle cx="33" cy="31" r="3" />
          <circle cx="45" cy="31" r="3" />
        </g>
      </NavItem>
    </nav>
  );
}

export default function App() {
  return (
    <div className="flex min-h-screen flex-col bg-[#fefefe] font-['Noto_Sans_CJK_SC',sans-serif]">
      <StatusBar />
      <Header />
      <main className="flex grow flex-col">
        <Quote />
        <Bond />
        <Notice />
        <Tabs />
        <Averages />
        <Charts />
        <section className="mt-[8px] h-[60px] grow overflow-hidden bg-[#fff3ef] px-9 pt-[30px]">
          <div className="h-[120px] rounded-t-[24px] border-[3px] border-[#f4c8be] bg-white pr-[22px] pt-[12px]">
            <div className="ml-auto h-[84px] w-[84px] rounded-full bg-[linear-gradient(60deg,#fb5a10,#ff9440)]" />
          </div>
        </section>
      </main>
      <BottomNav />
    </div>
  );
}
